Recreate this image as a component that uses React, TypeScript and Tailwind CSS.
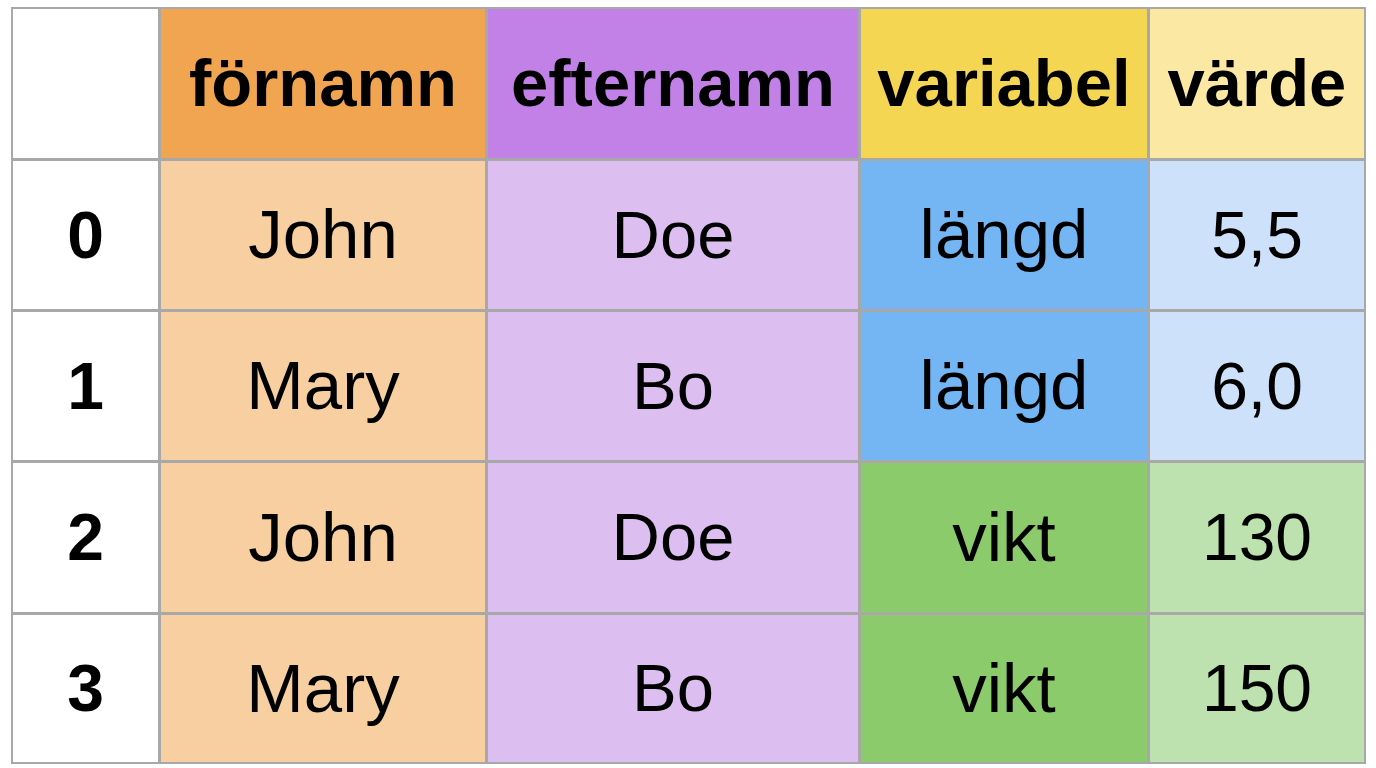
import React from "react";

const headers = [
  { t: "", bg: "bg-white" },
  { t: "förnamn", bg: "bg-[#f2a550]" },
  { t: "efternamn", bg: "bg-[#c181e7]" },
  { t: "variabel", bg: "bg-[#f4d653]" },
  { t: "värde", bg: "bg-[#fbe8a2]" },
];

const rows = [
  { i: "0", f: "John", e: "Doe", v: "längd", w: "5,5", vb: "bg-[#73b6f3]", wb: "bg-[#cde2fa]" },
  { i: "1", f: "Mary", e: "Bo", v: "längd", w: "6,0", vb: "bg-[#73b6f3]", wb: "bg-[#cde2fa]" },
  { i: "2", f: "John", e: "Doe", v: "vikt", w: "130", vb: "bg-[#8bcb6b]", wb: "bg-[#bde2b0]" },
  { i: "3", f: "Mary", e: "Bo", v: "vikt", w: "150", vb: "bg-[#8bcb6b]", wb: "bg-[#bde2b0]" },
];

const cell = "flex items-center justify-center";

export default function App() {
  return (
    <div
      className="w-[1376px] h-[768px] bg-white pl-[11px] pt-[7px]"
      style={{ fontFamily: '"Liberation Sans", Arial, sans-serif' }}
    >
      <div className="inline-grid grid-cols-[145px_324px_370px_286px_214px] grid-rows-[149px_148px_148px_149px_147px] gap-[3px] p-[2px] bg-[#a8a8a8] text-black">
        {headers.map((h, k) => (
          <div key={k} className={`${cell} ${h.bg} text-[67px] font-bold`}>
            {h.t}
          </div>
        ))}
        {rows.map((r) => (
          <React.Fragment key={r.i}>
            <div className={`${cell} bg-white text-[66px] font-bold`}>{r.i}</div>
            <div className={`${cell} bg-[#f8cfa0] text-[69px]`}>{r.f}</div>
            <div className={`${cell} bg-[#ddbef0] text-[67px]`}>{r.e}</div>
            <div className={`${cell} ${r.vb} text-[69px]`}>{r.v}</div>
            <div className={`${cell} ${r.wb} text-[66px]`}>{r.w}</div>
          </React.Fragment>
        ))}
      </div>
    </div>
  );
}
